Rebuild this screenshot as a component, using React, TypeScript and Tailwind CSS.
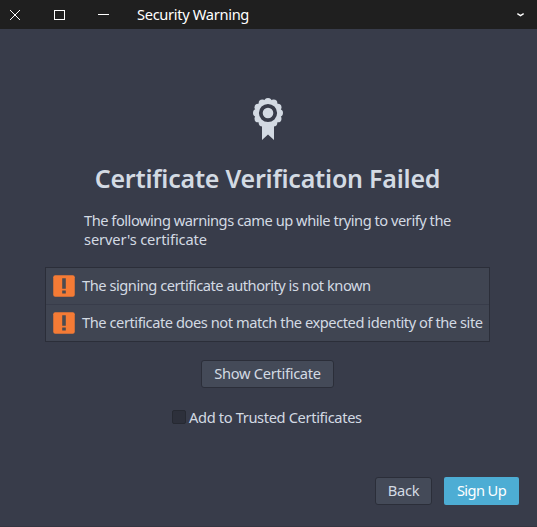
import React from "react";

const WARNINGS = [
  { text: "The signing certificate authority is not known", tracking: "tracking-[-0.47px]" },
  { text: "The certificate does not match the expected identity of the site", tracking: "tracking-[-0.45px]" },
];

function TitleBar() {
  return (
    <header className="flex h-[29px] shrink-0 items-center bg-[#1f1f1f] text-white">
      <svg className="ml-2.5 shrink-0" width="10" height="10" viewBox="0 0 10 10" stroke="currentColor" strokeWidth="1" fill="none">
        <path d="M0 0 10 10M10 0 0 10" />
      </svg>
      <svg className="ml-[34px] shrink-0" width="11" height="10" viewBox="0 0 11 10" stroke="currentColor" fill="none" shapeRendering="crispEdges">
        <path d="M.5.5h10v9H.5z" />
      </svg>
      <span className="ml-[33px] h-px w-[11px] bg-white" />
      <h1 className="ml-7 text-[14.67px] leading-[29px] tracking-[-0.33px] whitespace-nowrap">Security Warning</h1>
      <svg className="mr-[13px] ml-auto shrink-0" width="7" height="4" viewBox="0 0 7 4" fill="none" stroke="currentColor" strokeWidth="1.4">
        <path d="M.3.7 3.5 2.7 6.7.7" />
      </svg>
    </header>
  );
}

function Rosette() {
  const petals = Array.from({ length: 12 }, (_, i) => {
    const a = (i * Math.PI) / 6;
    return <circle key={i} cx={15 + 11.3 * Math.cos(a)} cy={15 + 11.3 * Math.sin(a)} r="3.7" />;
  });
  return (
    <svg width="30" height="43" viewBox="0 0 30 43" fill="#d3dae3">
      {petals}
      <circle cx="15" cy="15" r="13" />
      <path d="M9 24h12v18l-6-5.5L9 42z" />
      <circle cx="15" cy="15" r="7.2" fill="#d3dae3" stroke="#383c4a" strokeWidth="3.8" />
    </svg>
  );
}

function WarningIcon() {
  return (
    <svg className="shrink-0" width="22" height="22" viewBox="0 0 22 22">
      <rect x=".25" y=".25" width="21.5" height="21.5" rx="2" fill="#f57b35" />
      <path d="M9.2 3.2h3.6v10.6H9.2zM9.2 15.4h3.6v3.2H9.2z" fill="#4b4b50" />
    </svg>
  );
}

export default function App() {
  return (
    <div className="flex h-[527px] w-[537px] flex-col overflow-hidden bg-[#383c4a] font-['Noto_Sans',sans-serif] text-[14.67px] text-[#d3dae3]">
      <TitleBar />
      <main className="flex flex-1 flex-col items-center border-b border-[#343541] pt-[69px] pr-0.5">
        <Rosette />
        <h2 className="mt-[19px] text-[25px] leading-9 font-semibold tracking-[-0.22px] whitespace-nowrap">Certificate Verification Failed</h2>
        <p className="mt-[15px] w-[367px] leading-[19px] whitespace-nowrap">
          <span className="block tracking-[-0.48px]">The following warnings came up while trying to verify the</span>
          <span className="block tracking-[-0.13px]">server's certificate</span>
        </p>
        <ul className="mt-[18px] w-[445px] border border-[#2b2e39] bg-[#404552]">
          {WARNINGS.map(({ text, tracking }) => (
            <li key={text} className="flex h-[37px] items-center gap-[7px] border-b border-[#383c4a] pl-[7px] last:h-9 last:border-0">
              <WarningIcon />
              <span className={`pb-0.5 whitespace-nowrap ${tracking}`}>{text}</span>
            </li>
          ))}
        </ul>
        <button className="mt-[18px] h-7 w-[133px] rounded-[3px] border border-[#2b2e39] bg-[#444a58] pb-[3px] tracking-[-0.3px] whitespace-nowrap">Show Certificate</button>
        <label className="mt-[19px] flex h-5 w-[191px] items-center gap-[3px] tracking-[-0.36px] whitespace-nowrap">
          <span className="size-3.5 shrink-0 rounded-xs border border-[#262932] bg-[#2d303b]" />
          <span>Add to Trusted Certificates</span>
        </label>
        <footer className="mt-auto mb-[21px] flex gap-3 self-end pr-4">
          <button className="h-7 w-[57px] rounded-[3px] border border-[#2b2e39] bg-[#444a58] pb-0.5 tracking-[-0.3px]">Back</button>
          <button className="h-7 w-[75px] rounded-xs bg-[#4dadd4] pb-0.5 tracking-[-0.6px] whitespace-nowrap text-white">Sign Up</button>
        </footer>
      </main>
    </div>
  );
}
